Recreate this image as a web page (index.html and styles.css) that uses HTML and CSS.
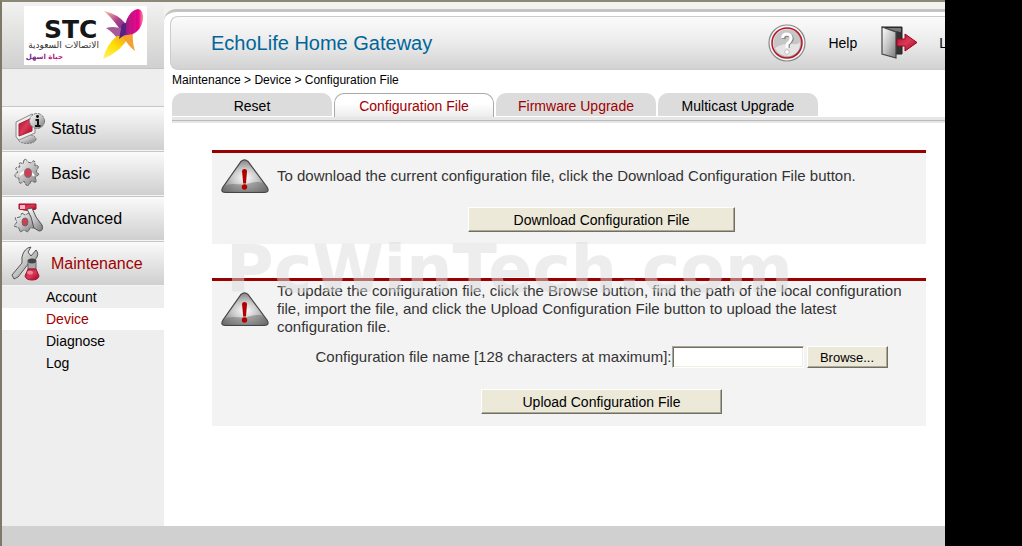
FILE: index.html
```html
<!DOCTYPE html>
<html lang="en">
<head>
<meta charset="utf-8">
<title>EchoLife Home Gateway</title>
<link rel="stylesheet" href="styles.css">
</head>
<body>
<svg class="defs" width="0" height="0" aria-hidden="true">
  <defs>
    <linearGradient id="steel" x1="0" y1="0" x2="1" y2="1"><stop offset="0" stop-color="#fff"/><stop offset=".5" stop-color="#c4c4c4"/><stop offset="1" stop-color="#777"/></linearGradient>
    <linearGradient id="red" x1="0" y1="0" x2="1" y2="1"><stop offset="0" stop-color="#b3102a"/><stop offset=".5" stop-color="#d83a58"/><stop offset="1" stop-color="#a5001c"/></linearGradient>
    <radialGradient id="warnFill" cx=".5" cy=".55" r=".6"><stop offset="0" stop-color="#fff"/><stop offset=".45" stop-color="#c9c9c9"/><stop offset="1" stop-color="#777"/></radialGradient>
    <symbol id="warning" viewBox="0 0 48 34">
      <path d="M20 2.500Q23.500-.8 27 2.500L46 28Q49 33.300 43.500 33.300H4Q-1 33.300 2 28Z" fill="url(#warnFill)" stroke="#444" stroke-width="1.200"/>
      <path d="M2.500 28C10 22 18 27 26 25C34 23 38 22 42.500 24L45.500 28.500Q47 32.300 43.500 32.500H4Q.5 32.300 2.500 28Z" fill="#666" opacity=".45"/>
      <path d="M21 12Q21 10 23.500 10T26 12L25 24.500H22.200Z" fill="#b00000"/>
      <circle cx="23.500" cy="28" r="2.700" fill="#b00000"/>
    </symbol>
  </defs>
</svg>
<div class="window">
  <div class="page">
    <aside class="sidebar">
      <div class="brand">
        <svg class="logo" viewBox="0 0 123 59" role="img" aria-label="STC">
          <defs>
            <linearGradient id="wing" x1="0" y1="0" x2="1" y2="0"><stop offset="0" stop-color="#5d2683"/><stop offset=".4" stop-color="#c01583"/><stop offset=".8" stop-color="#ec008c"/><stop offset="1" stop-color="#f6a0a0"/></linearGradient>
            <linearGradient id="ray" x1="0" y1="0" x2="1" y2="1"><stop offset="0" stop-color="#fbc9a0"/><stop offset=".5" stop-color="#b0408a"/><stop offset="1" stop-color="#5d2683"/></linearGradient>
            <linearGradient id="tail" x1="0" y1="1" x2="1" y2="0"><stop offset="0" stop-color="#fff27a"/><stop offset=".5" stop-color="#ffe000"/><stop offset="1" stop-color="#f39a2b"/></linearGradient>
            <linearGradient id="slogan" x1="0" y1="0" x2="1" y2="0"><stop offset="0" stop-color="#5d2683"/><stop offset="1" stop-color="#d0107e"/></linearGradient>
            <filter id="soft" x="-10%" y="-10%" width="120%" height="120%"><feGaussianBlur stdDeviation=".7"/></filter>
          </defs>
          <rect width="123" height="59" fill="#fff"/>
          <g filter="url(#soft)">
            <path d="M80 5Q94 8 102 18L99 28Q92 16 80 5Z" fill="url(#ray)"/>
            <path d="M82 22Q91 19 102 24L95 35Q90 27 82 22Z" fill="#a65a98"/>
            <path d="M93 30L105 30Q98 45 79 53Q82 39 93 30Z" fill="url(#tail)"/>
            <path d="M99 30L109 26Q108 36 111 45Q104 40 99 30Z" fill="#f5a030"/>
            <path d="M97 30Q100 22 103 13Q107 4 114 3Q120 4 119 14Q117 24 109 28Z" fill="url(#wing)"/>
            <path d="M98 18L102 17 102 28 95 33Z" fill="#542480"/>
          </g>
          <text class="logo-name" x="20" y="32">STC</text>
          <text class="logo-sub" x="75" y="42" text-anchor="end" direction="ltr">الاتصالات السعودية</text>
          <text class="logo-slogan" x="39" y="53" text-anchor="end" direction="ltr" fill="url(#slogan)">حياة اسهل</text>
        </svg>
      </div>
      <nav class="menu" aria-label="Main">
        <a class="menu-item" href="#status">
          <svg class="menu-icon" viewBox="0 0 32 32" aria-hidden="true">
            <ellipse cx="13" cy="26" rx="9" ry="4.500" fill="url(#steel)" stroke="#777" stroke-dasharray="2 1"/>
            <path d="M2 9L18 1 21 3V20L5 27 2 24Z" fill="#eee" stroke="#888"/>
            <path d="M5 11L18 5V18L5 23Z" fill="url(#red)" stroke="#a23"/>
            <circle cx="23" cy="8" r="7.500" fill="url(#steel)" stroke="#777" stroke-dasharray="3 1"/>
            <path d="M21.500 7H24V12.500M21 13H26.500" fill="none" stroke="#111" stroke-width="2"/><circle cx="23.500" cy="3.500" r="1.400"/>
          </svg>
          <span>Status</span></a>
        <a class="menu-item" href="#basic">
          <svg class="menu-icon" viewBox="0 0 32 32" aria-hidden="true">
            <path d="M10 2Q12 0 14 4L17 5Q20 1 21 4L21 8Q25 6 24 10L22 14Q27 16 23 18L21 20Q24 25 20 24L17 23Q15 29 12 27L10 23Q6 27 5 24L5 20Q0 20 1 16L4 14Q0 10 3 9L6 9Q4 4 7 5L9 6Z" fill="url(#steel)" stroke="#666" stroke-dasharray="4 1"/>
            <path d="M6 17Q14 9 20 18" fill="none" stroke="#fff" stroke-width="2"/>
            <ellipse cx="14" cy="15" rx="3.500" ry="4.500" fill="#d63b55" stroke="#777"/>
          </svg>
          <span>Basic</span></a>
        <a class="menu-item" href="#advanced">
          <svg class="menu-icon" viewBox="0 0 32 32" aria-hidden="true">
            <path d="M8 10L11 12 15 10 17 14 21 16 19 20 20 25 16 25 14 29 10 27 6 29 5 25 0 23 3 19 1 15 6 14Z" fill="url(#steel)" stroke="#666" stroke-dasharray="4 1"/>
            <path d="M5 1H22V6Q14 9 5 6Z" fill="url(#red)" stroke="#a4122b"/><path d="M6 2H11V6H6Z" fill="#ffb5c3"/>
            <path d="M13 6L18 5 22 14 28 22Q30 28 25 28L20 25 17 14Z" fill="url(#steel)" stroke="#555"/>
            <ellipse cx="11" cy="19" rx="3" ry="4" fill="#d63b55" stroke="#666"/>
          </svg>
          <span>Advanced</span></a>
        <a class="menu-item menu-item-active" href="#maintenance" aria-current="true">
          <svg class="menu-icon" viewBox="0 0 32 32" aria-hidden="true">
            <path d="M8 9Q10 0 17-1L14 4 17 8 22 2Q26 6 21 12L15 15 4 29 0 31-2 27 8 15Z" fill="url(#steel)" stroke="#555"/>
            <path d="M14 12H22V21H14Z" fill="#aaa" stroke="#666"/><ellipse cx="18" cy="13" rx="4" ry="2.500" fill="#444"/>
            <path d="M14 21H22L25 28Q24 32 18 32T11 28Z" fill="url(#red)" stroke="#a4122b"/>
            <ellipse cx="16" cy="24.500" rx="3" ry="2" fill="#ec8296"/>
          </svg>
          <span>Maintenance</span></a>
        <ul class="submenu">
          <li><a href="#account">Account</a></li>
          <li><a class="submenu-active" href="#device" aria-current="page">Device</a></li>
          <li><a href="#diagnose">Diagnose</a></li>
          <li><a href="#log">Log</a></li>
        </ul>
      </nav>
    </aside>
    <main class="main">
      <div class="sheet">
      <header class="header">
        <h1>EchoLife Home Gateway</h1>
        <div class="actions">
          <svg class="help-icon" viewBox="0 0 38 38" aria-hidden="true">
            <circle cx="19" cy="19" r="18" fill="#f8f8f8" stroke="#888" stroke-width="1.200"/>
            <circle cx="19" cy="19" r="15" fill="url(#steel)" stroke="#b5162b" stroke-width="1.500"/>
            <circle cx="19" cy="19" r="13.500" fill="#c6c6c6"/>
            <path d="M7 24Q16 19 24 20T32 17Q33 29 22 32Q12 33 7 24Z" fill="#e4e4e4"/>
            <path d="M15.500 15Q16 11 20 11Q24.500 11.500 24 15.500Q23 18 20.500 19.500Q20 21 20 24" fill="none" stroke="#888" stroke-width="3.500"/>
            <path d="M14.500 14Q15 10 19 10Q23.500 10.500 23 15Q22 18 19.500 19.500Q19 21 19 24" fill="none" stroke="#fff" stroke-width="3"/>
            <circle cx="19" cy="28" r="2.300" fill="#fff" stroke="#999" stroke-width=".5"/>
          </svg>
          <a class="help" href="#help">Help</a>
          <svg class="exit-icon" viewBox="0 0 37 34" aria-hidden="true">
            <path d="M1 1H21V28H13Z" fill="#333" stroke="#222"/><path d="M2 2H20V6L14 5Z" fill="#777"/>
            <path d="M1 1L15 6V32L1 28Z" fill="url(#steel)" stroke="#444" stroke-width="1.200"/>
            <path d="M16 13H24V8L36 16.500 24 25V20H16Z" fill="url(#red)" stroke="#a5001c"/>
          </svg>
          <a href="#logout">Logout</a>
        </div>
      </header>
      <p class="breadcrumb">Maintenance &gt; Device &gt; Configuration File</p>
      <nav class="tabs" aria-label="Device pages">
        <a class="tab" href="#reset">Reset</a>
        <a class="tab tab-active" href="#config" aria-current="page">Configuration File</a>
        <a class="tab tab-visited" href="#firmware">Firmware Upgrade</a>
        <a class="tab" href="#multicast">Multicast Upgrade</a>
      </nav>
      <div class="rule"></div>
      <div class="content">
        <section class="panel">
          <div class="notice notice-short">
            <svg class="warning" aria-hidden="true"><use href="#warning"/></svg>
            <p>To download the current configuration file, click the Download Configuration File button.</p>
          </div>
          <div class="controls">
            <button class="btn btn-download" type="button">Download Configuration File</button>
          </div>
        </section>
        <section class="panel">
          <div class="notice">
            <svg class="warning" aria-hidden="true"><use href="#warning"/></svg>
            <p>To update the configuration file, click the Browse button, find the path of the local configuration file, import the file, and click the Upload Configuration File button to upload the latest configuration file.</p>
          </div>
          <form class="controls">
            <div class="file-row">
              <label for="filename">Configuration file name [128 characters at maximum]:</label>
              <input id="filename" type="text" maxlength="128">
              <button class="btn btn-browse" type="button">Browse...</button>
            </div>
            <button class="btn btn-upload" type="button">Upload Configuration File</button>
          </form>
        </section>
        <div class="watermark">PcWinTech.com</div>
      </div>
      </div>
    </main>
  </div>
  <footer class="footer"></footer>
</div>
</body>
</html>
```

FILE: styles.css
```css
* {
  box-sizing: border-box;
}

body {
  margin: 0;
  padding-right: 77px;
  background: #000;
  color: #000;
  font: 14px/18px "Liberation Sans", Arial, sans-serif;
}

a {
  color: inherit;
  text-decoration: none;
}

h1,
p,
ul {
  margin: 0;
  padding: 0;
}

.defs {
  position: absolute;
}

.window {
  display: flex;
  flex-direction: column;
  min-height: 100vh;
  border-top: 2px solid #8c8878;
  border-left: 2px solid #7d7969;
  background: #eee;
}

.page {
  display: flex;
  flex: 1;
}

.footer {
  height: 20px;
  background: #d0d0d0;
}

/* Sidebar */
.sidebar {
  flex: 0 0 162px;
}

.brand {
  height: 67px;
  padding: 4px 0 0 22px;
  border-bottom: 1px solid #c4c4c4;
  background: linear-gradient(#f2f2f0, #d0d0d0);
}

.logo {
  display: block;
  width: 123px;
  height: 59px;
}

.logo-name {
  font: bold 25px "DejaVu Sans", sans-serif;
  fill: #161616;
}

.logo-sub {
  font: 9px "DejaVu Sans", sans-serif;
  fill: #333;
}

.logo-slogan {
  font: bold 7px "DejaVu Sans", sans-serif;
}

.menu {
  margin-top: 37px;
}

.menu-item {
  display: flex;
  align-items: center;
  gap: 5px;
  height: 45px;
  padding-left: 12px;
  border-top: 1px solid #c6c6c6;
  border-bottom: 1px solid #f4f4f4;
  background: linear-gradient(#fafafa, #cfcfcf);
  font-size: 16px;
}

.menu-icon {
  width: 32px;
  height: 34px;
  overflow: visible;
}

.menu-item-active,
.submenu-active,
.tab-active,
.tab-visited {
  color: #a00000;
}

.submenu {
  list-style: none;
}

.submenu a {
  display: block;
  padding-left: 44px;
  line-height: 22px;
}

.submenu .submenu-active {
  background: #fff;
}

/* Main column */
.main {
  flex: 1;
  min-width: 0;
  padding-top: 7px;
  overflow: hidden;
  background: #f2f2ee;
}

.sheet {
  height: 100%;
  padding: 4px 0 0 6px;
  border-top: 3px solid #c4c4c4;
  border-top-left-radius: 12px;
  background: #fff;
}

.header {
  display: flex;
  align-items: center;
  height: 54px;
  padding-left: 40px;
  border: solid #ccc;
  border-width: 1px 0 1px 1px;
  border-radius: 8px 0 0 8px;
  background: linear-gradient(#fbfbfb, #ebebeb 50%, #d2d2d2);
}

h1 {
  color: #069;
  font-size: 20px;
  font-weight: normal;
  line-height: 24px;
}

.actions {
  display: flex;
  align-items: center;
  margin-right: -37px;
  margin-left: auto;
}

.help-icon {
  width: 38px;
  height: 38px;
  margin-right: 22px;
}

.help {
  margin-right: 24px;
}

.exit-icon {
  width: 37px;
  height: 34px;
  margin-right: 21px;
}

.breadcrumb {
  padding: 1px 2px 4px;
  font-size: 12px;
}

.tabs {
  display: flex;
  gap: 2px;
  padding-left: 2px;
}

.tab {
  width: 160px;
  height: 24px;
  border-bottom: 1px solid #fff;
  border-radius: 10px 10px 0 0;
  background: #dcdcdc;
  line-height: 26px;
  text-align: center;
}

.tab-active {
  border: 1px solid #aaa;
  border-bottom: 0;
  background: linear-gradient(#fff 40%, #ececec);
  line-height: 24px;
}

.rule {
  height: 6px;
  margin-left: 2px;
  border: solid #e6e6e6;
  border-width: 3px 0 2px;
  background: #bbb;
}

.content {
  position: relative;
  display: grid;
  gap: 34px;
  padding: 27px 19px 0 42px;
}

.panel {
  padding-bottom: 12px;
  border-top: 3px solid #900;
  background: #f3f3f3;
  color: #333;
  font-size: 15px;
}

.notice {
  display: grid;
  grid-template-columns: 48px 1fr;
  gap: 8px;
  align-items: center;
  padding: 1px 6px 0 9px;
}

.notice-short {
  min-height: 44px;
}

.warning {
  width: 48px;
  height: 34px;
}

.controls {
  display: flex;
  flex-direction: column;
  align-items: center;
  gap: 21px;
  padding: 10px 0 0 65px;
}

.file-row {
  display: flex;
  align-items: center;
}

.file-row input {
  width: 132px;
  height: 22px;
  margin-right: 3px;
  border: 1px solid;
  border-color: #aca899 #fff #fff #aca899;
  background: #fff;
  box-shadow: inset 1px 1px #716f64, inset -1px -1px #f1efe2;
}

.btn {
  height: 25px;
  padding: 0;
  border: 1px solid;
  border-color: #fff #716f64 #716f64 #fff;
  background: #ece9d8;
  box-shadow: inset -1px -1px #aca899;
  color: #000;
  font: 14px "Liberation Sans", Arial, sans-serif;
}

.btn-download {
  width: 267px;
}

.btn-upload {
  width: 241px;
}

.btn-browse {
  width: 81px;
  height: 22px;
  font-size: 13px;
}

/* Translucent site mark lying over both panels */
.watermark {
  position: absolute;
  top: 111px;
  left: 56px;
  color: rgba(220, 220, 220, .5);
  font: bold 65px/72px "DejaVu Sans", sans-serif;
  pointer-events: none;
}
```
